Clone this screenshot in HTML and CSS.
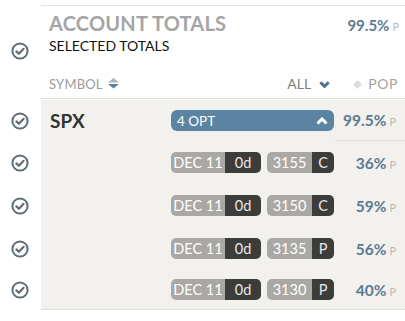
FILE: index.html
```html
<!DOCTYPE html>
<html>
<head>
<meta charset="utf-8">
<link rel="stylesheet" href="styles.css">
</head>
<body>
<div class="panel">
  <div class="row head">
    <div class="gutter"><svg class="check" viewBox="0 0 18 18"><circle cx="9" cy="9" r="7.6"/><path d="M5.4 9.4 L7.9 11.8 L12.6 6.8"/></svg></div>
    <div class="head-main">
      <div class="title-row">
        <span class="title">ACCOUNT TOTALS</span>
        <span class="pop head-pop"><b>99.5%</b><i>P</i></span>
      </div>
      <div class="subtitle">SELECTED TOTALS</div>
      <div class="cols">
        <span class="sym">SYMBOL <svg class="sort" viewBox="0 0 11 11"><polygon class="up" points="5.5,0 11,4.5 0,4.5"/><polygon class="down" points="0,6 11,6 5.5,10.5"/></svg></span>
        <span class="all">ALL <svg class="chev" viewBox="0 0 11 7"><path d="M1.3 1.3 L5.5 5.4 L9.7 1.3"/></svg></span>
        <span class="popcol"><svg class="diamond" viewBox="0 0 9 9"><polygon points="4.5,0 9,4.5 4.5,9 0,4.5"/></svg> POP</span>
      </div>
    </div>
  </div>

  <div class="group">
    <div class="row spx">
      <div class="gutter"><svg class="check" viewBox="0 0 18 18"><circle cx="9" cy="9" r="7.6"/><path d="M5.4 9.4 L7.9 11.8 L12.6 6.8"/></svg></div>
      <div class="main">
        <div class="symcell"><span class="symbol">SPX</span></div>
        <div class="legs">
          <div class="opt"><span>4 OPT</span><svg class="chev-up" viewBox="0 0 12 8"><path d="M1.5 6.5 L6 2 L10.5 6.5"/></svg></div>
        </div>
        <div class="pop row-pop ruled"><b>99.5%</b><i>P</i></div>
      </div>
    </div>

    <div class="row leg">
      <div class="gutter"><svg class="check" viewBox="0 0 18 18"><circle cx="9" cy="9" r="7.6"/><path d="M5.4 9.4 L7.9 11.8 L12.6 6.8"/></svg></div>
      <div class="main">
        <div class="symcell"></div>
        <div class="legs">
          <div class="pill exp"><span class="lt">DEC 11</span><span class="dk">0d</span></div>
          <div class="pill strike"><span class="lt">3155</span><span class="dk">C</span></div>
        </div>
        <div class="pop row-pop"><b>36%</b><i>P</i></div>
      </div>
    </div>

    <div class="row leg">
      <div class="gutter"><svg class="check" viewBox="0 0 18 18"><circle cx="9" cy="9" r="7.6"/><path d="M5.4 9.4 L7.9 11.8 L12.6 6.8"/></svg></div>
      <div class="main">
        <div class="symcell"></div>
        <div class="legs">
          <div class="pill exp"><span class="lt">DEC 11</span><span class="dk">0d</span></div>
          <div class="pill strike"><span class="lt">3150</span><span class="dk">C</span></div>
        </div>
        <div class="pop row-pop"><b>59%</b><i>P</i></div>
      </div>
    </div>

    <div class="row leg">
      <div class="gutter"><svg class="check" viewBox="0 0 18 18"><circle cx="9" cy="9" r="7.6"/><path d="M5.4 9.4 L7.9 11.8 L12.6 6.8"/></svg></div>
      <div class="main">
        <div class="symcell"></div>
        <div class="legs">
          <div class="pill exp"><span class="lt">DEC 11</span><span class="dk">0d</span></div>
          <div class="pill strike"><span class="lt">3135</span><span class="dk">P</span></div>
        </div>
        <div class="pop row-pop"><b>56%</b><i>P</i></div>
      </div>
    </div>

    <div class="row leg last">
      <div class="gutter"><svg class="check" viewBox="0 0 18 18"><circle cx="9" cy="9" r="7.6"/><path d="M5.4 9.4 L7.9 11.8 L12.6 6.8"/></svg></div>
      <div class="main">
        <div class="symcell"></div>
        <div class="legs">
          <div class="pill exp"><span class="lt">DEC 11</span><span class="dk">0d</span></div>
          <div class="pill strike"><span class="lt">3130</span><span class="dk">P</span></div>
        </div>
        <div class="pop row-pop"><b>40%</b><i>P</i></div>
      </div>
    </div>
  </div>
</div>
</body>
</html>
```

FILE: styles.css
```css
* { box-sizing: border-box; }
html, body { margin: 0; padding: 0; background: #ffffff; }
body { font-family: Lato, "Open Sans", sans-serif; width: 405px; height: 321px; overflow: hidden; }

.panel { padding-top: 5px; }

.row { display: flex; }
.gutter { width: 41px; flex: none; display: flex; align-items: center; justify-content: center; padding-right: 1px; }

.check { width: 18px; height: 18px; }
.check circle { fill: none; stroke: #5e6d78; stroke-width: 2; }
.check path { fill: none; stroke: #5e6d78; stroke-width: 2.2; stroke-linecap: round; stroke-linejoin: round; }

/* header */
.head .gutter { align-items: flex-start; padding-top: 37px; }
.head-main { flex: 1; border-top: 1px solid #e3e3e3; border-bottom: 1px solid #e0dfdc; padding: 5px 0 6px 8px; }
.title-row { display: flex; align-items: baseline; justify-content: space-between; height: 24px; line-height: 24px; }
.title { font-size: 20px; font-weight: 700; color: #a5a5a5; letter-spacing: 0.2px; }
.subtitle { margin-top: 2px; font-size: 14px; line-height: 17px; color: #111111; }
.cols { margin-top: 22px; display: flex; align-items: center; font-size: 13px; line-height: 16px; color: #9c9c9c; }
.sym { flex: 1; display: flex; align-items: center; gap: 5px; letter-spacing: 0.2px; }
.sort { width: 11px; height: 11px; margin-top: -1px; }
.sort .up { fill: #a7b5c0; }
.sort .down { fill: #5e809a; }
.all { display: flex; align-items: center; gap: 8px; color: #7d7d7d; font-size: 14px; }
.chev { width: 11px; height: 7px; }
.chev path { fill: none; stroke: #4f7291; stroke-width: 3; }
.popcol { display: flex; align-items: center; gap: 6px; margin-left: 23px; padding-right: 7px; color: #a3a3a3; font-size: 14px; letter-spacing: 0.6px; }
.diamond { width: 9px; height: 9px; }
.diamond polygon { fill: #dcdcdc; }

.pop { display: flex; align-items: baseline; justify-content: flex-end; color: #5b7a92; }
.pop b { font-weight: 700; }
.pop i { font-style: normal; font-size: 11px; color: #b9b9b9; margin-left: 3px; }
.head-pop { padding-right: 6px; }
.head-pop b { font-size: 15px; }

/* group */
.group { margin-top: 1px; }
.main { flex: 1; display: flex; align-items: center; background: #f2f1ed; }
.symcell { width: 130px; flex: none; padding-left: 9px; }
.symbol { font-size: 19px; font-weight: 700; color: #333333; }
.legs { width: 164px; flex: none; display: flex; gap: 6px; }
.row-pop { flex: 1; padding-right: 9px; }
.row-pop b { font-size: 15.5px; }

.spx { height: 41px; }
.spx .main { align-items: stretch; }
.spx .symcell, .spx .legs { display: flex; align-items: center; }
.ruled { align-items: center; border-bottom: 1px solid #dddcd8; }
.ruled b, .ruled i { align-self: center; }
.ruled i { margin-top: 3px; }

.opt { width: 163px; height: 21px; border-radius: 6px; background: #5b84a2; color: #ffffff; display: flex; align-items: center; justify-content: space-between; padding: 0 6px 0 6px; font-size: 13.5px; }
.chev-up { width: 12px; height: 8px; }
.chev-up path { fill: none; stroke: #ffffff; stroke-width: 3; }

.leg { height: 43px; }
.leg.last { height: 40px; }
.leg.last .main { border-bottom: 1px solid #e0dfdc; }

.pill { display: flex; height: 21px; border-radius: 5px; overflow: hidden; font-size: 14.5px; line-height: 21px; color: #ffffff; }
.pill span { display: block; text-align: center; }
.pill .lt { background: #a9a8a4; }
.pill .dk { background: #3c3c3b; color: #e8e8e8; }
.exp .lt { width: 54px; }
.exp .dk { width: 36px; }
.strike .lt { width: 45px; }
.strike .dk { width: 22px; }
```
